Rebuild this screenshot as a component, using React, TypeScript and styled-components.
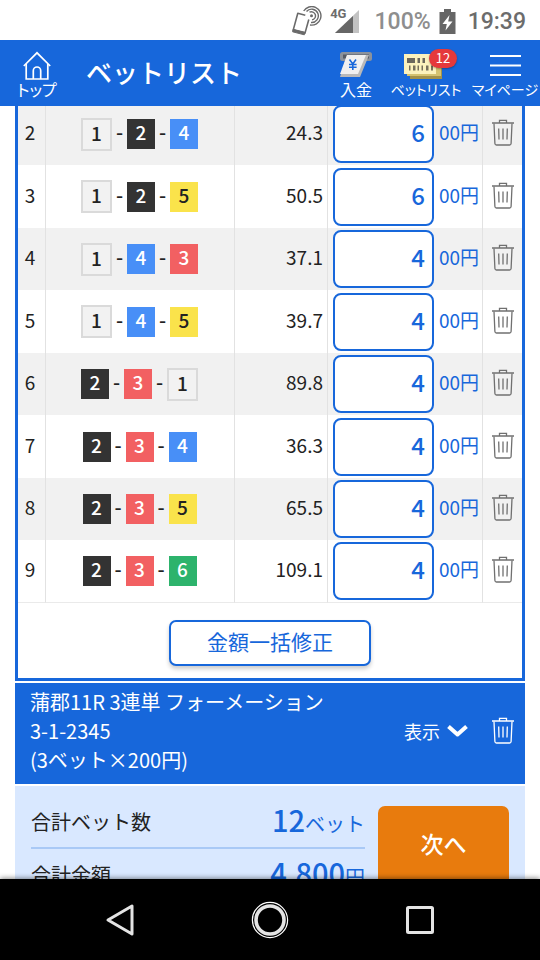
import React from 'react';
import styled, { createGlobalStyle, css } from 'styled-components';

const blue = '#1767db';

const GlobalStyle = createGlobalStyle`
  * { box-sizing: border-box; }
  body {
    margin: 0;
    background: #fff;
    color: #222;
    font-family: "Noto Sans CJK JP", sans-serif;
    font-size: 20px;
  }
  button, input { font: inherit; color: inherit; margin: 0; padding: 0; }
  button { border: 0; background: none; cursor: pointer; }
  svg { display: block; flex: none; }
`;

const Screen = styled.div`
  display: flex;
  flex-direction: column;
  height: 100vh;
  overflow: hidden;
`;

const StatusBar = styled.div`
  flex: none;
  display: flex;
  align-items: center;
  justify-content: flex-end;
  height: 40px;
  padding: 2px 14px 0 0;
  font-family: Roboto, sans-serif;
  font-size: 23px;
  font-weight: 500;
  color: #6c6c6c;
`;

const BatteryLevel = styled.span`
  margin: 0 8px 0 15px;
  color: #8e8e8e;
`;

const Clock = styled.span`
  margin-left: 12px;
`;

const Network = styled.span`
  align-self: flex-start;
  margin: 4px 0 0 8px;
  font-family: Roboto, sans-serif;
  font-size: 13px;
  line-height: 16px;
  font-weight: 700;
`;

const SignalSlot = styled.span`
  margin-left: -11px;
`;

const Header = styled.header`
  position: relative;
  z-index: 1;
  flex: none;
  display: flex;
  align-items: stretch;
  height: 66px;
  background: ${blue};
  color: #fff;
`;

const Title = styled.h1`
  flex: 1;
  margin: 0 0 2px 12px;
  align-self: center;
  font-size: 26px;
  line-height: 36px;
  font-weight: 500;
`;

const HeaderLink = styled.a<{ $width: number }>`
  flex: none;
  display: flex;
  flex-direction: column;
  align-items: center;
  width: ${p => p.$width}px;
  padding-top: 11px;
  color: inherit;
  text-decoration: none;
  white-space: nowrap;
`;

const HeaderIcon = styled.span`
  display: flex;
  align-items: flex-start;
  justify-content: center;
  height: 29px;
`;

const BadgedIcon = styled(HeaderIcon)`
  position: relative;
  padding-right: 6px;
`;

const HeaderLabel = styled.span<{ $small?: boolean }>`
  font-size: ${p => (p.$small ? 14 : 16)}px;
  line-height: 18px;
  font-feature-settings: "palt";
`;

const Badge = styled.span`
  position: absolute;
  top: -2px;
  right: -8px;
  width: 28px;
  height: 19px;
  border-radius: 10px;
  background: #e5393c;
  box-shadow: 0 1px 2px rgba(0, 0, 0, 0.3);
  font-size: 13px;
  line-height: 18px;
  text-align: center;
`;

const Main = styled.main`
  flex: 1;
  min-height: 0;
  overflow: hidden;
  display: flex;
  flex-direction: column;
  gap: 2px;
  padding: 0 15px;
  margin-top: -3px;
`;

const BetPanel = styled.section`
  flex: none;
  border: solid ${blue};
  border-width: 0 3px 3px;
  padding-bottom: 12px;
`;

const BetTable = styled.table`
  width: 100%;
  table-layout: fixed;
  border-collapse: separate;
  border-spacing: 0;
`;

const Col = styled.col<{ $width?: number }>`
  width: ${p => (p.$width ? `${p.$width}px` : 'auto')};
`;

const BetRow = styled.tr<{ $shaded: boolean }>`
  height: ${p => (p.$shaded ? 62 : 63)}px;
  background: ${p => (p.$shaded ? '#f1f1f1' : '#fff')};

  &:last-child td { border-bottom: 1px solid #eaeaea; }
`;

const Cell = styled.td<{ $align?: string }>`
  padding: 0;
  border-right: 1px solid #e2e2e2;
  text-align: ${p => p.$align || 'center'};
  vertical-align: middle;
  line-height: 28px;

  &:last-child { border-right: 0; }
`;

const IndexText = styled.span`
  display: block;
  padding: 0 3px 4px 0;
  font-size: 19px;
`;

const OddsText = styled.span`
  display: block;
  padding: 0 4px 4px 0;
  font-size: 19px;
`;

const Combo = styled.div`
  display: flex;
  align-items: center;
  justify-content: center;
  padding-right: 1px;
`;

const Dash = styled.span`
  width: 15px;
  padding-bottom: 4px;
  text-align: center;
  font-weight: 500;
`;

const lane: Record<number, ReturnType<typeof css>> = {
  1: css`
    width: 31px;
    height: 33px;
    border: 2px solid #dadada;
    background: #f2f2f2;
    color: #222;
  `,
  2: css`background: #333; color: #fff;`,
  3: css`background: #f26062; color: #fff;`,
  4: css`background: #488ff7; color: #fff;`,
  5: css`background: #fae34b; color: #222;`,
  6: css`background: #2db36c; color: #fff;`,
};

const Chip = styled.span<{ $lane: number }>`
  width: 28px;
  height: 30px;
  line-height: 25px;
  font-size: 19px;
  font-weight: 500;
  text-align: center;
  ${p => lane[p.$lane]}
`;

const Amount = styled.label`
  display: flex;
  align-items: center;
  padding: 0 3px 0 5px;
  color: ${blue};
`;

const AmountInput = styled.input`
  width: 101px;
  height: 58px;
  padding: 0 7px 5px 0;
  border: 2px solid ${blue};
  border-radius: 8px;
  background: #fff;
  color: ${blue};
  font-size: 24px;
  font-weight: 500;
  text-align: right;
  outline: 0;
`;

const Unit = styled.span`
  flex: 1;
  padding: 0 0 4px 5px;
  font-size: 19px;
  white-space: nowrap;
`;

const IconButton = styled.button`
  display: block;
  margin: 0 auto;
  padding: 0 0 3px;
`;

const BulkButton = styled.button`
  display: block;
  width: 202px;
  height: 46px;
  margin: 17px auto 0;
  padding-bottom: 4px;
  border: 2px solid ${blue};
  border-radius: 7px;
  background: #fff;
  box-shadow: 0 3px 4px rgba(0, 0, 0, 0.2);
  color: ${blue};
  font-size: 21px;
  line-height: 38px;
`;

const Formation = styled.section`
  flex: none;
  display: flex;
  align-items: center;
  padding: 4px 11px 10px 15px;
  background: ${blue};
  color: #fff;
`;

const FormationText = styled.p`
  flex: 1;
  margin: 0;
  line-height: 29px;
`;

const ShowButton = styled.button`
  display: flex;
  align-items: center;
  gap: 7px;
  margin-right: 24px;
  color: #fff;
  font-size: 18px;
  line-height: 28px;
`;

const Summary = styled.section`
  flex: none;
  display: flex;
  gap: 13px;
  align-items: flex-start;
  padding: 10px 16px 20px;
  background: #d9e8ff;
`;

const Totals = styled.dl`
  flex: 1;
  margin: 0;
`;

const TotalRow = styled.div`
  display: flex;
  align-items: center;
  justify-content: space-between;
  height: 53px;
  border-bottom: 2px solid #a9c9f6;
`;

const TotalLabel = styled.dt`
  line-height: 30px;
`;

const TotalValue = styled.dd`
  margin: 0;
  color: ${blue};
  line-height: 40px;
`;

const Figure = styled.strong`
  font-size: 29px;
  font-weight: 500;
`;

const NextButton = styled.button`
  width: 131px;
  height: 86px;
  margin-top: 10px;
  padding-bottom: 12px;
  border-radius: 7px;
  background: #e87b0d;
  color: #fff;
  font-size: 23px;
  font-weight: 500;
`;

const NavBar = styled.nav`
  position: relative;
  flex: none;
  display: grid;
  grid-template-columns: repeat(3, 1fr);
  align-items: center;
  height: 81px;
  padding: 0 45px;
  background: #000;
  box-shadow: 0 -1px 5px rgba(0, 0, 0, 0.45);
`;

const NavButton = styled.button`
  display: flex;
  justify-content: center;
`;

const Trash = ({ color = '#707070' }: { color?: string }) => (
  <svg width="22" height="27" viewBox="0 0 22 27" fill="none" stroke={color} strokeWidth="1.3">
    <path d="M0 4h22M7.500 4V1.300h7V4" />
    <path d="M2 4.500l.9 20c.1 1 .6 1.500 1.500 1.500h13.200c.9 0 1.400-.5 1.500-1.500l.9-20" />
    <path d="M6.700 9.500l.3 11M11 9.500v11M15.300 9.500l-.3 11" />
  </svg>
);

const HomeIcon = () => (
  <svg width="28" height="29" viewBox="0 0 28 29" fill="none" stroke="#fff" strokeWidth="1.700">
    <path d="M.8 15L14 1.800 27.200 15" />
    <path d="M3.200 13v15h21.600V13" />
    <path d="M10.300 28v-8.300a3.700 3.700 0 0 1 7.400 0V28" />
  </svg>
);

const DepositIcon = () => (
  <svg width="34" height="28" viewBox="0 0 34 28">
    <rect x="1" y="1" width="32" height="9" rx="2.500" fill="#8b929c" />
    <rect x="4" y="3.500" width="26" height="4" fill="#555b66" />
    <path d="M8 4h22L21 26H1z" fill="#b9b9b9" />
    <path d="M8 4h19L19 23H1z" fill="#f0f0f0" />
    <path d="M10.500 8.500l3.300 4.500 3.200-4.500M13.800 13v6M10 13.500h7.600M10 16.300h7.600" fill="none" stroke={blue} strokeWidth="1.600" />
  </svg>
);

const TicketIcon = () => (
  <svg width="40" height="28" viewBox="0 0 40 28">
    <path d="M7 8h32v20H7z" fill="#a3924b" />
    <path d="M4 6h34v19H4z" fill="#d5c26f" />
    <path d="M1 3h32v20H1z" fill="#fcf2bd" />
    <path d="M4 7h8v5H4zM14.500 7H17v5h-2.500zM19.500 7H22v5h-2.500z" fill="#6b675c" />
    <path d="M6 14.500h1.500v5H6zM10 14.500h2.500v5H10zM14.500 14.500H16v5h-1.500zM18.500 14.500H20v5h-1.500zM23 14.500h2.500v5H23zM28 14.500h2v5h-2z" fill="#77705c" />
  </svg>
);

const MenuIcon = () => (
  <svg width="31" height="26" viewBox="0 0 31 26" stroke="#fff" strokeWidth="2">
    <path d="M0 5h31M0 14.500h31M0 24h31" />
  </svg>
);

const NfcIcon = () => (
  <svg width="31" height="30" viewBox="0 0 31 30" fill="none" stroke="#6a6a6a">
    <path d="M17.800 13.500l-3.800 13.600-11.800-3L6.800 7.300l7.500 1.900" strokeWidth="1.600" strokeLinejoin="round" />
    <path d="M2.200 23.300l11.800 3-.7 2.500-11.700-3z" fill="#6a6a6a" strokeWidth="1" />
    <circle cx="20.500" cy="9.800" r="1.500" fill="#6a6a6a" stroke="none" />
    <path d="M18.500 6.200a4.100 4.100 0 1 1 2.500 7.700M15.500 5.500a6.700 6.700 0 1 1 4.500 11M12.700 5A9.300 9.300 0 1 1 19 19" strokeWidth="1.400" />
  </svg>
);

const SignalIcon = () => (
  <svg width="24" height="24" viewBox="0 0 24 24">
    <path d="M0 24L24 1v23z" fill="#c2c2c2" />
    <path d="M0 24L18 7v17z" fill="#666" />
  </svg>
);

const BatteryIcon = () => (
  <svg width="17" height="25" viewBox="0 0 17 25">
    <path d="M5 0h7v3h4.500v22H.5V3H5z" fill="#666" />
    <path d="M10.500 6l-7 9h4.300L6.500 21.500l7-9H9.200z" fill="#fff" />
  </svg>
);

const ChevronIcon = () => (
  <svg width="21" height="13" viewBox="0 0 21 13" fill="none" stroke="#fff" strokeWidth="4">
    <path d="M1.500 2.500l9 8 9-8" strokeLinejoin="round" />
  </svg>
);

const bets = [
  { no: 2, combo: [1, 2, 4], odds: '24.3', amount: 6 },
  { no: 3, combo: [1, 2, 5], odds: '50.5', amount: 6 },
  { no: 4, combo: [1, 4, 3], odds: '37.1', amount: 4 },
  { no: 5, combo: [1, 4, 5], odds: '39.7', amount: 4 },
  { no: 6, combo: [2, 3, 1], odds: '89.8', amount: 4 },
  { no: 7, combo: [2, 3, 4], odds: '36.3', amount: 4 },
  { no: 8, combo: [2, 3, 5], odds: '65.5', amount: 4 },
  { no: 9, combo: [2, 3, 6], odds: '109.1', amount: 4 },
];

export default function App() {
  return (
    <Screen>
      <GlobalStyle />
      <StatusBar>
        <NfcIcon />
        <Network>4G</Network>
        <SignalSlot><SignalIcon /></SignalSlot>
        <BatteryLevel>100%</BatteryLevel>
        <BatteryIcon />
        <Clock>19:39</Clock>
      </StatusBar>

      <Header>
        <HeaderLink href="#top" $width={74}>
          <HeaderIcon><HomeIcon /></HeaderIcon>
          <HeaderLabel>トップ</HeaderLabel>
        </HeaderLink>
        <Title>ベットリスト</Title>
        <HeaderLink href="#deposit" $width={52}>
          <HeaderIcon><DepositIcon /></HeaderIcon>
          <HeaderLabel>入金</HeaderLabel>
        </HeaderLink>
        <HeaderLink href="#bets" $width={88}>
          <BadgedIcon><TicketIcon /><Badge>12</Badge></BadgedIcon>
          <HeaderLabel $small>ベットリスト</HeaderLabel>
        </HeaderLink>
        <HeaderLink href="#mypage" $width={70}>
          <HeaderIcon><MenuIcon /></HeaderIcon>
          <HeaderLabel $small>マイページ</HeaderLabel>
        </HeaderLink>
      </Header>

      <Main>
        <BetPanel>
          <BetTable>
            <colgroup>
              <Col $width={28} />
              <Col />
              <Col $width={93} />
              <Col $width={155} />
              <Col $width={39} />
            </colgroup>
            <tbody>
              {bets.map(bet => (
                <BetRow key={bet.no} $shaded={bet.no % 2 === 0}>
                  <Cell><IndexText>{bet.no}</IndexText></Cell>
                  <Cell>
                    <Combo>
                      {bet.combo.map((n, i) => (
                        <React.Fragment key={n}>
                          {i > 0 && <Dash>-</Dash>}
                          <Chip $lane={n}>{n}</Chip>
                        </React.Fragment>
                      ))}
                    </Combo>
                  </Cell>
                  <Cell $align="right"><OddsText>{bet.odds}</OddsText></Cell>
                  <Cell $align="left">
                    <Amount>
                      <AmountInput inputMode="numeric" defaultValue={bet.amount} />
                      <Unit>00円</Unit>
                    </Amount>
                  </Cell>
                  <Cell>
                    <IconButton type="button" aria-label="削除"><Trash /></IconButton>
                  </Cell>
                </BetRow>
              ))}
            </tbody>
          </BetTable>
          <BulkButton type="button">金額一括修正</BulkButton>
        </BetPanel>

        <Formation>
          <FormationText>
            蒲郡11R 3連単 フォーメーション<br />
            3-1-2345<br />
            (3ベット×200円)
          </FormationText>
          <ShowButton type="button">表示<ChevronIcon /></ShowButton>
          <button type="button" aria-label="削除"><Trash color="#fff" /></button>
        </Formation>

        <Summary>
          <Totals>
            <TotalRow>
              <TotalLabel>合計ベット数</TotalLabel>
              <TotalValue><Figure>12</Figure>ベット</TotalValue>
            </TotalRow>
            <TotalRow>
              <TotalLabel>合計金額</TotalLabel>
              <TotalValue><Figure>4,800</Figure>円</TotalValue>
            </TotalRow>
          </Totals>
          <NextButton type="button">次へ</NextButton>
        </Summary>
      </Main>

      <NavBar>
        <NavButton type="button" aria-label="戻る">
          <svg width="32" height="36" viewBox="0 0 32 36" fill="none" stroke="#e4e4e4" strokeWidth="3" strokeLinejoin="round">
            <path d="M4 18L28 4v28z" />
          </svg>
        </NavButton>
        <NavButton type="button" aria-label="ホーム">
          <svg width="38" height="38" viewBox="0 0 38 38" fill="none">
            <circle cx="19" cy="19" r="17.600" stroke="#fff" strokeWidth="1.200" />
            <circle cx="19" cy="19" r="14" stroke="#e4e4e4" strokeWidth="3.600" />
          </svg>
        </NavButton>
        <NavButton type="button" aria-label="最近">
          <svg width="30" height="30" viewBox="0 0 30 30" fill="none">
            <rect x="2.500" y="2.500" width="25" height="25" rx="1" stroke="#e4e4e4" strokeWidth="3" />
          </svg>
        </NavButton>
      </NavBar>
    </Screen>
  );
}
